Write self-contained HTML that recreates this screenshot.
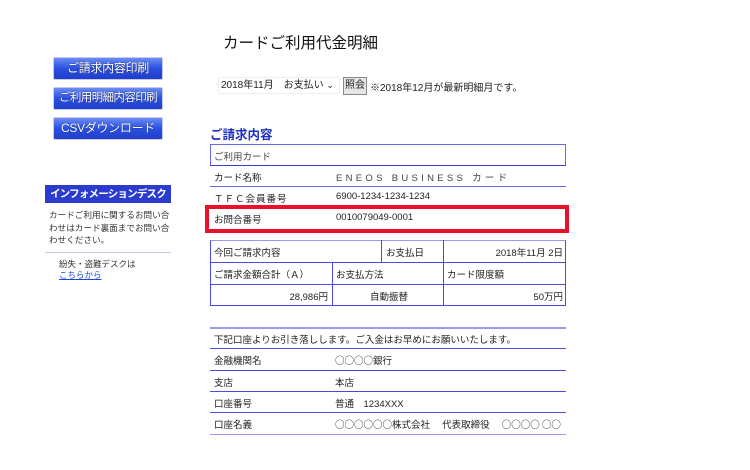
<!DOCTYPE html>
<html><head><meta charset="utf-8"><style>
*{margin:0;padding:0;box-sizing:border-box}
body{width:750px;height:470px;background:#fff;position:relative;font-family:"Liberation Sans","Noto Sans CJK JP",sans-serif;color:#222;font-size:9.5px;overflow:hidden}
.a{position:absolute}
.btn{position:absolute;left:53px;width:110px;height:23px;background:linear-gradient(#6a8cf5,#2a4fe0 50%,#1f3fc8);border:1px solid #c8c8f0;border-radius:2px;color:#fff;font-size:12px;text-align:center;line-height:21px;text-shadow:0 0 1px #113;white-space:nowrap;letter-spacing:-0.3px}
.hl{position:absolute;height:1px;background:#4a4ae0}
.vl{position:absolute;width:1px;background:#4a4ae0}
.t{position:absolute;font-size:9.5px;white-space:nowrap}
.c{font-family:"Noto Sans CJK JP",sans-serif;font-size:9.5px}
</style></head><body>
<div class="a" style="left:223px;top:31px;font-size:15.5px;color:#111">カードご利用代金明細</div>
<div class="btn" style="top:57px">ご請求内容印刷</div>
<div class="btn" style="top:87px;font-size:11.5px;letter-spacing:-0.6px">ご利用明細内容印刷</div>
<div class="btn" style="top:117px">CSVダウンロード</div>
<div class="a" style="left:45px;top:185px;width:126px;height:18px;background:#2b3bd0;color:#fff;font-weight:bold;font-size:10.5px;letter-spacing:-0.8px;text-align:center;line-height:18px;white-space:nowrap">インフォメーションデスク</div>
<div class="a" style="left:49px;top:209px;width:124px;font-size:8.6px;letter-spacing:0px;line-height:12.5px;color:#333">カードご利用に関するお問い合わせはカード裏面までお問い合わせください。</div>
<div class="a" style="left:45px;top:252px;width:126px;height:1px;background:#c8c8f8"></div>
<div class="t" style="left:59px;top:258px;font-size:8.5px;color:#333">紛失・盗難デスクは</div>
<div class="t" style="left:59px;top:269px;font-size:8.5px;color:#1a4ad0;text-decoration:underline">こちらから</div>

<div class="a" style="left:218px;top:77px;width:122px;height:17px;border:1px solid #eee;font-size:10px;line-height:15px;padding-left:2px">2018年11月　お支払い <span style="font-size:9px">&#x2304;</span></div>
<div class="a" style="left:343px;top:77px;width:24px;height:18px;background:#e6e6e6;border:1px solid #888;font-size:10px;line-height:16px;text-align:center">照会</div>
<div class="t" style="left:370px;top:79px;font-size:10px">※2018年12月が最新明細月です。</div>

<div class="t" style="left:210px;top:124px;font-size:12.5px;font-weight:bold;color:#1f2fc0">ご請求内容</div>
<div class="a" style="left:210px;top:144px;width:356px;height:22px;border:1px solid #6a6ae8;border-bottom-color:#3a3ad8"></div>
<div class="t" style="left:214px;top:149px;color:#444">ご利用カード</div>
<div class="t" style="left:214px;top:170px">カード名称</div>
<div class="t" style="left:336px;top:170px;letter-spacing:3.3px;color:#444">ENEOS BUSINESS カード</div>
<div class="hl" style="left:210px;top:186px;width:356px;background:#6a6ae8"></div>
<div class="t" style="left:214px;top:191px;letter-spacing:1px">ＴＦＣ会員番号</div>
<div class="t" style="left:336px;top:191px">6900-1234-1234-1234</div>
<div class="a" style="left:205px;top:205px;width:364px;height:28px;border:4px solid #e8102a"></div>
<div class="t" style="left:214px;top:212px">お問合番号</div>
<div class="t" style="left:336px;top:212px">0010079049-0001</div>

<div class="a" style="left:210px;top:240px;width:356px;height:66px;border:1px solid #4a4ae0;border-top-color:#9a9af0"></div>
<div class="hl" style="left:210px;top:262px;width:356px"></div>
<div class="hl" style="left:210px;top:284px;width:356px"></div>
<div class="vl" style="left:381px;top:240px;height:22px"></div>
<div class="vl" style="left:443px;top:240px;height:66px"></div>
<div class="vl" style="left:332px;top:262px;height:44px"></div>
<div class="t" style="left:214px;top:245px">今回ご請求内容</div>
<div class="t" style="left:386px;top:245px">お支払日</div>
<div class="t" style="right:187px;top:245px">2018年11月 2日</div>
<div class="t" style="left:214px;top:267px">ご請求金額合計（Ａ）</div>
<div class="t" style="left:336px;top:267px">お支払方法</div>
<div class="t" style="left:447px;top:267px">カード限度額</div>
<div class="t" style="right:422px;top:289px">28,986円</div>
<div class="t" style="left:370px;top:289px">自動振替</div>
<div class="t" style="right:187px;top:289px">50万円</div>

<div class="hl" style="left:210px;top:327px;width:356px;background:#9a9af0;height:2px"></div>
<div class="t" style="left:214px;top:332px">下記口座よりお引き落しします。ご入金はお早めにお願いいたします。</div>
<div class="hl" style="left:210px;top:348px;width:356px"></div>
<div class="t" style="left:214px;top:353px">金融機関名</div><div class="t" style="left:335px;top:353px"><span class="c">○○○○</span>銀行</div>
<div class="hl" style="left:210px;top:370px;width:356px"></div>
<div class="t" style="left:214px;top:375px">支店</div><div class="t" style="left:335px;top:375px">本店</div>
<div class="hl" style="left:210px;top:391px;width:356px"></div>
<div class="t" style="left:214px;top:396px">口座番号</div><div class="t" style="left:335px;top:396px">普通　1234XXX</div>
<div class="hl" style="left:210px;top:412px;width:356px"></div>
<div class="t" style="left:214px;top:417px">口座名義</div><div class="t" style="left:335px;top:417px"><span class="c">○○○○○○</span>株式会社　 代表取締役　 <span class="c">○○○○ ○○</span></div>
<div class="hl" style="left:210px;top:434px;width:356px;background:#9a9af0"></div>
</body></html>
